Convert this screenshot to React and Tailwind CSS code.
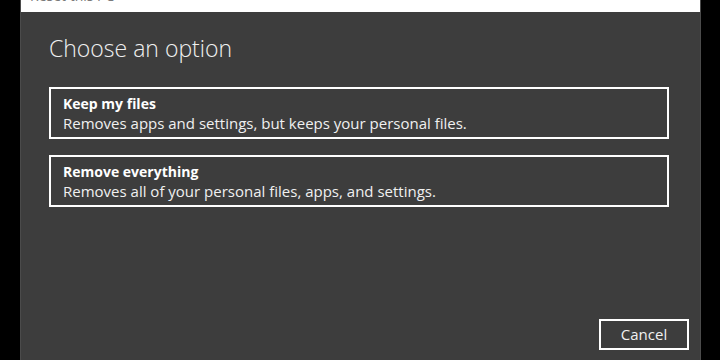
export default function App() {
  const options = [
    {
      title: "Keep my files",
      desc: "Removes apps and settings, but keeps your personal files.",
    },
    {
      title: "Remove everything",
      desc: "Removes all of your personal files, apps, and settings.",
    },
  ];

  return (
    <div className="w-[720px] h-[360px] bg-black flex font-['Open_Sans','Noto_Sans',sans-serif] overflow-hidden">
      <div className="w-[20px] shrink-0" />
      <div className="w-[681px] h-full flex flex-col border-x border-[#4b4b4b]">
        <div className="h-[12px] bg-white overflow-hidden pl-[9px]">
          <div className="-mt-[12px] text-[14px] leading-[16px] text-[#7a7a7a]">
            Reset this PC
          </div>
        </div>
        <div className="flex-1 bg-[#3d3d3d] flex flex-col pl-[28px] pr-[11px] pt-[20px] pb-[10px]">
          <h1 className="text-[23px] leading-[32px] font-light text-[#f0f0f0]">
            Choose an option
          </h1>
          <div className="mt-[23px] mr-[20px] flex flex-col gap-[16px]">
            {options.map((o) => (
              <div
                key={o.title}
                className="h-[52px] border-2 border-white px-[12px] pt-[5px] flex flex-col text-white"
              >
                <div className="text-[14px] leading-[19px] font-bold">{o.title}</div>
                <div className="text-[15px] leading-[20px] text-[#f0f0f0]">{o.desc}</div>
              </div>
            ))}
          </div>
          <div className="flex-1" />
          <div className="flex justify-end">
            <button className="w-[90px] h-[31px] border-2 border-white text-[15px] text-[#f0f0f0]">
              Cancel
            </button>
          </div>
        </div>
      </div>
    </div>
  );
}
